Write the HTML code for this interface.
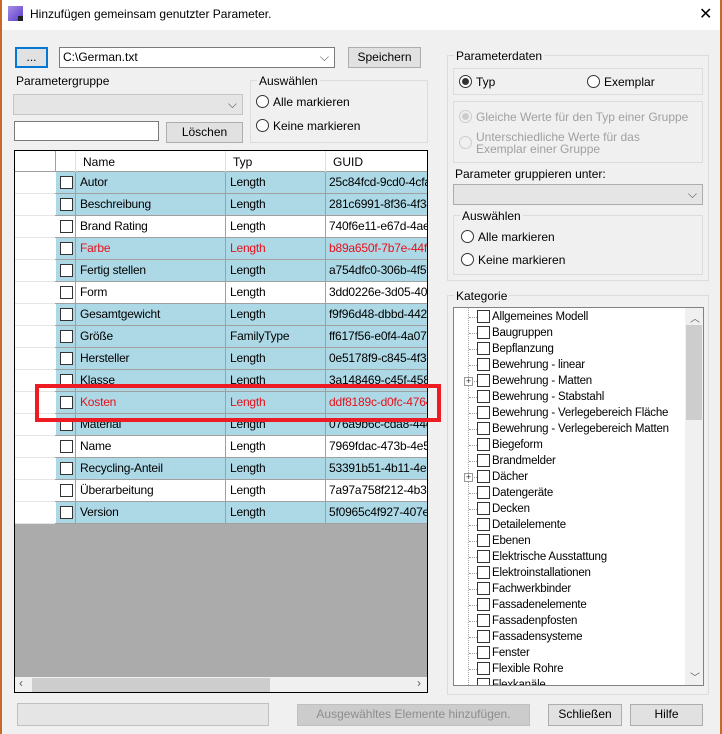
<!DOCTYPE html>
<html><head><meta charset="utf-8"><style>
*{box-sizing:border-box;margin:0;padding:0}
body{width:722px;height:734px;background:#f0f0f0;font-family:"Liberation Sans",Arial,sans-serif;font-size:12px;color:#000;position:relative;overflow:hidden}
.a{position:absolute}
.btn{position:absolute;background:#e1e1e1;border:1px solid #adadad;text-align:center;line-height:18px}
.grp{position:absolute;border:1px solid #dcdcdc}
.gl{position:absolute;background:#f0f0f0;padding:0 2px;line-height:14px}
.rad{position:absolute;width:13px;height:13px;border:1px solid #333;border-radius:50%;background:#fff}
.cb{position:absolute;width:13px;height:13px;border:1px solid #333;background:#fff}
.row{position:absolute;left:1px;width:412px;height:22px;border-bottom:1px solid #a0a0a0}
.row > div{position:absolute;top:0;height:21px;line-height:21px}
.row > div > div{position:absolute;top:0;height:21px;line-height:21px}
.row .cb{height:13px;top:4px;line-height:13px}
.tr{position:absolute;left:0;height:16px;line-height:16px;white-space:nowrap;font-size:11.5px;letter-spacing:-0.2px}
.row{letter-spacing:-0.2px}
</style></head><body>
<div class="a" style="left:0;top:0;width:722px;height:30px;background:#fff"></div>
<div class="a" style="left:0;top:0;width:2px;height:734px;background:#c8692a"></div>
<div class="a" style="left:720px;top:0;width:2px;height:734px;background:#c8692a"></div>
<div class="a" style="left:8px;top:6px;width:15px;height:15px;background:linear-gradient(135deg,#a78ee8,#5a3bc8);"></div>
<div class="a" style="left:18px;top:16px;width:5px;height:5px;background:#222"></div>
<div class="a" style="left:30px;top:7px;font-size:12px">Hinzufügen gemeinsam genutzter Parameter.</div>
<div class="a" style="left:699px;top:4px;font-size:16px">✕</div>

<div class="btn" style="left:15px;top:47px;width:33px;height:21px;border:2px solid #0078d7;line-height:16px">...</div>
<div class="a" style="left:59px;top:47px;width:276px;height:21px;background:#fff;border:1px solid #7a7a7a;padding-left:3px;line-height:19px">C:\German.txt<span style="position:absolute;right:5px;top:0;color:#555">⌵</span></div>
<div class="btn" style="left:348px;top:47px;width:73px;height:21px">Speichern</div>
<div class="a" style="left:16px;top:74px">Parametergruppe</div>
<div class="a" style="left:13px;top:94px;width:230px;height:21px;background:#e5e5e5;border:1px solid #c4c4c4"><span style="position:absolute;right:5px;top:2px;color:#555">⌵</span></div>
<div class="a" style="left:14px;top:121px;width:145px;height:20px;background:#fff;border:1px solid #7a7a7a"></div>
<div class="btn" style="left:166px;top:122px;width:77px;height:21px">Löschen</div>
<div class="grp" style="left:250px;top:80px;width:178px;height:63px"></div>
<div class="gl" style="left:257px;top:74px">Auswählen</div>
<div class="rad" style="left:256px;top:95px"></div><div class="a" style="left:273px;top:95px">Alle markieren</div>
<div class="rad" style="left:256px;top:119px"></div><div class="a" style="left:273px;top:119px">Keine markieren</div>

<!-- grid -->
<div class="a" style="left:14px;top:150px;width:414px;height:543px;border:1px solid #000;background:#ababab;overflow:hidden">
<div class="a" style="left:0;top:0;width:412px;height:21px;background:#fff;border-bottom:1px solid #a0a0a0"></div>
<div class="a" style="left:40px;top:0;width:1px;height:372px;background:#a0a0a0"></div>
<div class="a" style="left:60px;top:0;width:1px;height:21px;background:#e0e0e0"></div>
<div class="a" style="left:210px;top:0;width:1px;height:21px;background:#e0e0e0"></div>
<div class="a" style="left:310px;top:0;width:1px;height:21px;background:#e0e0e0"></div>
<div class="a" style="left:68px;top:4px">Name</div>
<div class="a" style="left:218px;top:4px">Typ</div>
<div class="a" style="left:318px;top:4px">GUID</div>
<div id="rows"></div>
<div class="a" style="left:0;top:526px;width:412px;height:16px;background:#f0f0f0"></div>
<div class="a" style="left:17px;top:527px;width:238px;height:14px;background:#cdcdcd"></div>
<div class="a" style="left:4px;top:525px;color:#606060;font-size:12px">‹</div>
<div class="a" style="left:402px;top:525px;color:#606060;font-size:12px">›</div>
</div>
<div class="a" style="left:35px;top:384px;width:406px;height:38px;border:4px solid #ed1c24"></div>

<!-- right -->
<div class="grp" style="left:447px;top:55px;width:262px;height:226px"></div>
<div class="gl" style="left:454px;top:49px">Parameterdaten</div>
<div class="grp" style="left:453px;top:68px;width:250px;height:27px"></div>
<div class="rad" style="left:459px;top:75px"></div><div class="a" style="left:462px;top:78px;width:7px;height:7px;border-radius:50%;background:#333"></div>
<div class="a" style="left:476px;top:75px">Typ</div>
<div class="rad" style="left:587px;top:75px"></div><div class="a" style="left:604px;top:75px">Exemplar</div>
<div class="grp" style="left:453px;top:101px;width:250px;height:62px"></div>
<div class="rad" style="left:459px;top:110px;border-color:#ccc;background:#f0f0f0"></div><div class="a" style="left:462px;top:113px;width:7px;height:7px;border-radius:50%;background:#ccc"></div>
<div class="a" style="left:476px;top:110px;color:#a0a0a0">Gleiche Werte für den Typ einer Gruppe</div>
<div class="rad" style="left:459px;top:136px;border-color:#ccc;background:#f0f0f0"></div>
<div class="a" style="left:476px;top:131px;color:#a0a0a0;line-height:12px">Unterschiedliche Werte für das<br>Exemplar einer Gruppe</div>
<div class="a" style="left:455px;top:167px">Parameter gruppieren unter:</div>
<div class="a" style="left:453px;top:184px;width:250px;height:21px;background:#e5e5e5;border:1px solid #adadad"><span style="position:absolute;right:5px;top:2px;color:#555">⌵</span></div>
<div class="grp" style="left:453px;top:215px;width:250px;height:60px"></div>
<div class="gl" style="left:460px;top:209px">Auswählen</div>
<div class="rad" style="left:461px;top:230px"></div><div class="a" style="left:478px;top:230px">Alle markieren</div>
<div class="rad" style="left:461px;top:253px"></div><div class="a" style="left:478px;top:253px">Keine markieren</div>
<div class="grp" style="left:447px;top:295px;width:262px;height:400px"></div>
<div class="gl" style="left:454px;top:289px">Kategorie</div>
<div class="a" style="left:453px;top:307px;width:251px;height:379px;background:#fff;border:1px solid #828282;overflow:hidden">
<div class="a" style="left:14px;top:0;width:0;height:379px;border-left:1px dotted #a0a0a0"></div>
<div id="tree" class="a" style="left:0;top:0"></div>
<div class="a" style="left:231px;top:0;width:18px;height:377px;background:#f0f0f0"></div>
<div class="a" style="left:232px;top:17px;width:16px;height:95px;background:#cdcdcd"></div>
<div class="a" style="left:236px;top:2px;color:#606060;font-size:10px">︿</div>
<div class="a" style="left:236px;top:361px;color:#606060;font-size:10px">﹀</div>
</div>

<div class="a" style="left:17px;top:703px;width:252px;height:23px;background:#e5e5e5;border:1px solid #c0c0c0"></div>
<div class="btn" style="left:297px;top:704px;width:233px;height:22px;background:#cccccc;border-color:#bfbfbf;color:#8d8d8d">Ausgewähltes Elemente  hinzufügen.</div>
<div class="btn" style="left:548px;top:704px;width:74px;height:22px">Schließen</div>
<div class="btn" style="left:630px;top:704px;width:73px;height:22px">Hilfe</div>

<script>
var R=[["Autor","Length","25c84fcd-9cd0-4cfa-",1],["Beschreibung","Length","281c6991-8f36-4f34-",1],["Brand Rating","Length","740f6e11-e67d-4ae7-",0],["Farbe","Length","b89a650f-7b7e-44ff-8",1,1],["Fertig stellen","Length","a754dfc0-306b-4f5f-",1],["Form","Length","3dd0226e-3d05-402a",0],["Gesamtgewicht","Length","f9f96d48-dbbd-4424-",1],["Größe","FamilyType","ff617f56-e0f4-4a07-a",1],["Hersteller","Length","0e5178f9-c845-4f3c-",1],["Klasse","Length","3a148469-c45f-458a",1],["Kosten","Length","ddf8189c-d0fc-4764-",1,1],["Material","Length","076a9b6c-cda8-44ea",1],["Name","Length","7969fdac-473b-4e59",0],["Recycling-Anteil","Length","53391b51-4b11-4e8a",1],["Überarbeitung","Length","7a97a758f212-4b3d",0],["Version","Length","5f0965c4f927-407e-",1]];
var h="";R.forEach(function(r,i){var bg=r[3]?"#add8e6":"#fff",c=r[4]?"#e8101a":"#000";
h+='<div class="row" style="top:'+(21+i*22)+'px;left:0;background:#fff"><div style="left:0;width:40px;background:#fff;border-bottom:1px solid #e5e5e5;height:22px"></div><div style="left:41px;width:371px;background:'+bg+';color:'+c+'"><div class="cb" style="left:4px"></div><div style="left:19px;width:1px;background:#a0a0a0"></div><div style="left:24px">'+r[0]+'</div><div style="left:169px;width:1px;background:#a0a0a0"></div><div style="left:174px">'+r[1]+'</div><div style="left:269px;width:1px;background:#a0a0a0"></div><div style="left:273px;white-space:nowrap">'+r[2]+'</div></div></div>';});
document.getElementById("rows").innerHTML=h;
var T=["Allgemeines Modell","Baugruppen","Bepflanzung","Bewehrung - linear","Bewehrung - Matten","Bewehrung - Stabstahl","Bewehrung - Verlegebereich Fläche","Bewehrung - Verlegebereich Matten","Biegeform","Brandmelder","Dächer","Datengeräte","Decken","Detailelemente","Ebenen","Elektrische Ausstattung","Elektroinstallationen","Fachwerkbinder","Fassadenelemente","Fassadenpfosten","Fassadensysteme","Fenster","Flexible Rohre","Flexkanäle"];
var t="";T.forEach(function(n,i){var y=1+i*16;t+='<div class="a" style="left:15px;top:'+(y+8)+'px;width:8px;border-top:1px dotted #a0a0a0"></div><div class="cb" style="left:23px;top:'+(y+1)+'px"></div><div class="tr" style="left:38px;top:'+y+'px">'+n+'</div>';
if(i==4||i==10)t+='<div class="a" style="left:10px;top:'+(y+4)+'px;width:9px;height:9px;border:1px solid #999;background:#fff;font-size:9px;line-height:7px;text-align:center;color:#333">+</div>';});
document.getElementById("tree").innerHTML=t;
</script>
</body></html>
